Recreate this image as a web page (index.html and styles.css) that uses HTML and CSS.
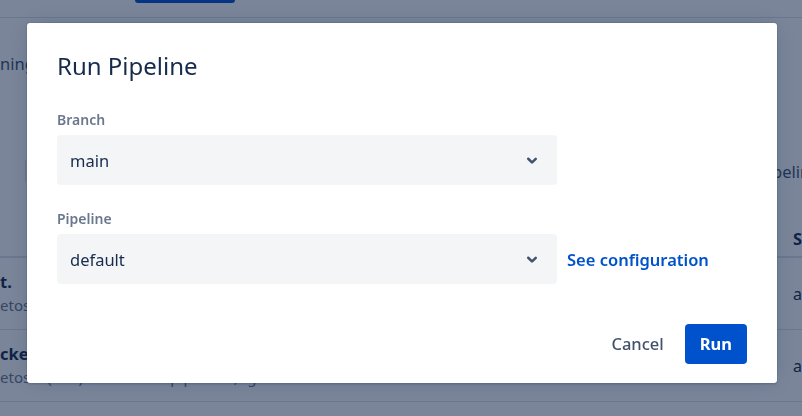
FILE: index.html
```html
<!DOCTYPE html>
<html lang="en">
<head>
<meta charset="utf-8">
<title>Run Pipeline</title>
<link rel="stylesheet" href="styles.css">
</head>
<body>
<div class="page">
  <header class="topbar">
    <span class="top-btn"></span>
  </header>
  <p class="intro">ning pipelines for your repository</p>
  <div class="card-row">
    <div class="card"></div>
    <span class="card-text">pelines</span>
  </div>
  <div class="table">
    <div class="thead">
      <span class="cell-main"></span>
      <span class="cell-side head">Status</span>
    </div>
    <div class="trow">
      <div class="cell-main">
        <span class="strong">t.</span>
        <span class="sub">etoshi (#12) main · configuring</span>
      </div>
      <span class="cell-side">a few seconds</span>
    </div>
    <div class="trow">
      <div class="cell-main">
        <span class="strong">cker image build</span>
        <span class="sub">etoshi (#11) &nbsp;/ bitbucket pipelines, /g</span>
      </div>
      <span class="cell-side">a minute ago</span>
    </div>
  </div>
</div>

<div class="blanket"></div>

<section class="modal" role="dialog" aria-labelledby="modal-title">
  <h1 class="modal-title" id="modal-title">Run Pipeline</h1>
  <div class="field">
    <label class="field-label">Branch</label>
    <div class="select-row">
      <div class="select">
        <span class="select-value">main</span>
        <svg class="chevron" viewBox="0 0 24 24" width="30" height="30" aria-hidden="true"><path fill="currentColor" d="M8.292 10.293a1.009 1.009 0 0 0 0 1.419l2.939 2.965c.218.215.5.322.779.322s.556-.107.769-.322l2.93-2.955a1.01 1.01 0 0 0 0-1.419.987.987 0 0 0-1.406 0l-2.298 2.317-2.307-2.327a.99.99 0 0 0-1.406 0z"/></svg>
      </div>
    </div>
  </div>
  <div class="field field-second">
    <label class="field-label">Pipeline</label>
    <div class="select-row">
      <div class="select">
        <span class="select-value">default</span>
        <svg class="chevron" viewBox="0 0 24 24" width="30" height="30" aria-hidden="true"><path fill="currentColor" d="M8.292 10.293a1.009 1.009 0 0 0 0 1.419l2.939 2.965c.218.215.5.322.779.322s.556-.107.769-.322l2.93-2.955a1.01 1.01 0 0 0 0-1.419.987.987 0 0 0-1.406 0l-2.298 2.317-2.307-2.327a.99.99 0 0 0-1.406 0z"/></svg>
      </div>
      <a class="config-link" href="#">See configuration</a>
    </div>
  </div>
  <footer class="modal-footer">
    <button class="btn btn-subtle" type="button">Cancel</button>
    <button class="btn btn-primary" type="button">Run</button>
  </footer>
</section>
</body>
</html>
```

FILE: styles.css
```css
* { box-sizing: border-box; }

html, body {
  margin: 0;
  padding: 0;
  width: 802px;
  height: 416px;
  overflow: hidden;
  background: #ffffff;
  font-family: "Noto Sans", "Open Sans", sans-serif;
  color: #172b4d;
}

/* ---------- background page ---------- */
.page {
  width: 802px;
  height: 416px;
  overflow: hidden;
}

.topbar {
  height: 18px;
  border-bottom: 1px solid #dfe1e6;
  display: flex;
  align-items: flex-start;
}

.top-btn {
  display: block;
  margin-left: 135px;
  width: 100px;
  height: 3px;
  background: #0052cc;
  border-radius: 0 0 3px 3px;
}

.intro {
  margin: 34px 0 0;
  font-size: 16.5px;
  line-height: 24px;
  color: #42526e;
  white-space: nowrap;
}

.card-row {
  margin-top: 78px;
  height: 34px;
  display: flex;
  align-items: center;
  overflow: hidden;
}

.card {
  flex: 0 0 auto;
  margin-left: 25px;
  width: 747px;
  height: 22px;
  border-left: 1px solid #dfe1e6;
}

.card-text {
  flex: 0 0 auto;
  font-size: 16.5px;
  color: #42526e;
  white-space: nowrap;
}

.table {
  margin-top: 32px;
}

.thead,
.trow {
  display: grid;
  grid-template-columns: 793px 1fr;
  border-bottom: 2px solid #dfe1e6;
}

.thead {
  height: 38px;
  align-items: center;
}

.trow {
  height: 72px;
  align-items: center;
  border-bottom-width: 1px;
}

.cell-main {
  display: flex;
  flex-direction: column;
  overflow: hidden;
  white-space: nowrap;
}

.cell-side {
  white-space: nowrap;
  overflow: hidden;
  font-size: 16px;
  color: #172b4d;
}

.cell-side.head {
  font-weight: 700;
  font-size: 16.5px;
}

.strong {
  font-size: 16.5px;
  font-weight: 700;
  line-height: 23px;
}

.sub {
  font-size: 15px;
  line-height: 24px;
  color: #6b778c;
}

/* ---------- blanket + modal ---------- */
.blanket {
  position: fixed;
  inset: 0;
  background: rgba(9, 30, 66, 0.54);
}

.modal {
  position: fixed;
  left: 27px;
  top: 23px;
  width: 750px;
  height: 360px;
  background: #ffffff;
  border-radius: 3px;
  box-shadow: 0 0 0 1px rgba(9, 30, 66, 0.08), 0 2px 1px rgba(9, 30, 66, 0.08), 0 0 20px -6px rgba(9, 30, 66, 0.31);
  padding: 25px 30px 19px;
  display: flex;
  flex-direction: column;
}

.modal-title {
  margin: 0;
  font-size: 24px;
  line-height: 35px;
  font-weight: 400;
  color: #172b4d;
}

.field {
  margin-top: 27px;
}

.field-second {
  margin-top: 24px;
}

.field-label {
  display: block;
  font-size: 14px;
  line-height: 20px;
  font-weight: 600;
  color: #6b778c;
  margin-bottom: 5px;
}

.select-row {
  display: flex;
  align-items: center;
}

.select {
  width: 500px;
  height: 50px;
  background: #f4f5f7;
  border: 2px solid #f4f5f7;
  border-radius: 4px;
  display: flex;
  align-items: center;
  justify-content: space-between;
  padding: 0 8px 0 11px;
}

.select-value {
  font-size: 16.5px;
  color: #172b4d;
}

.chevron {
  display: block;
  color: #42526e;
}

.config-link {
  margin-left: 10px;
  font-size: 16.5px;
  font-weight: 600;
  color: #0052cc;
  text-decoration: none;
}

.modal-footer {
  margin-top: auto;
  display: flex;
  justify-content: flex-end;
  gap: 6px;
}

.btn {
  height: 40px;
  padding: 0 15px;
  border: 0;
  border-radius: 4px;
  font-family: inherit;
  font-size: 16.5px;
  line-height: 40px;
  cursor: pointer;
}

.btn-subtle {
  background: transparent;
  color: #42526e;
  font-weight: 500;
}

.btn-primary {
  background: #0052cc;
  color: #ffffff;
  font-weight: 700;
}
```
